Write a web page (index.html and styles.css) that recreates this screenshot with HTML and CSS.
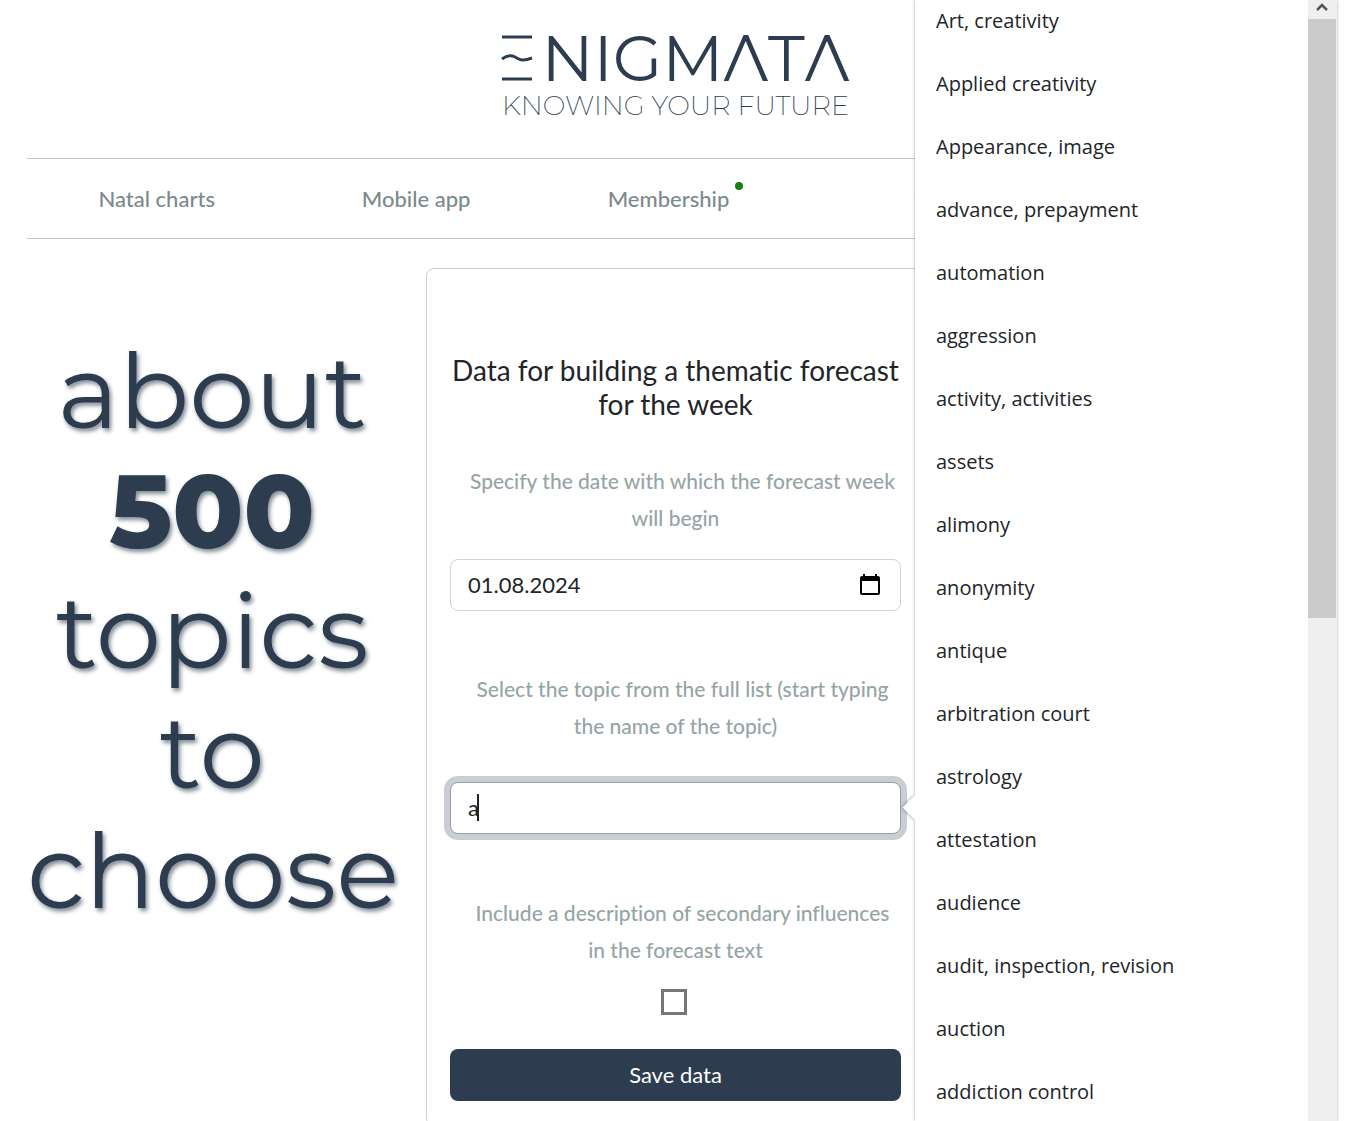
FILE: index.html
```html
<!DOCTYPE html>
<html lang="en">
<head>
  <meta charset="UTF-8" />
  <meta name="viewport" content="width=device-width, initial-scale=1.0"/>
  <title>Enigmata - Thematic forecast</title>
  <link rel="stylesheet" href="styles.css">
</head>
<body>
  <header class="header">
    <a class="logo" href="#">
      <span class="logo-name">
        <svg class="logo-mark" viewBox="0 0 32 46" fill="none" stroke="currentColor" stroke-width="3">
          <path d="M1 2H31M1 44H31" />
          <path d="M1 24C5 21 10 20 14 22S20 27 31 23" />
        </svg>
        <span>NIGMΛTΛ</span>
      </span>
      <span class="logo-tagline">KNOWING YOUR FUTURE</span>
    </a>
  </header>

  <nav class="nav">
    <a href="#">Natal charts</a>
    <a href="#">Mobile app</a>
    <a href="#">Membership<span class="dot"></span></a>
    <a href="#">Blog</a>
  </nav>

  <main class="content">
    <div class="promo">about<br><b>500</b><br>topics<br>to<br>choose</div>

    <form class="card">
      <h1>Data for building a thematic forecast for the week</h1>

      <label for="date">Specify the date with which the forecast week will begin</label>
      <div class="field">
        <input type="text" id="date" value="01.08.2024" />
        <svg class="calendar" viewBox="0 0 20 22">
          <path fill="#000" fill-rule="evenodd" d="M3 0h2v2h10V0h2v2h1a2 2 0 0 1 2 2v15a2 2 0 0 1-2 2H2a2 2 0 0 1-2-2V4a2 2 0 0 1 2-2h1zM2 7v12h16V7z" />
        </svg>
      </div>

      <label class="topic-label" for="topic">Select the topic from the full list (start typing the name of the topic)</label>
      <div class="field topic-field">
        <input type="text" id="topic" class="focused" value="a" autocomplete="off" />
        <span class="caret"></span>
      </div>

      <label class="secondary-label" for="secondary">Include a description of secondary influences<br>in the forecast text</label>
      <input type="checkbox" id="secondary" />

      <button type="button" class="save-btn">Save data</button>
    </form>
  </main>

  <!-- Topic suggestions -->
  <div class="suggestions">
    <ul>
      <li>Art, creativity</li>
      <li>Applied creativity</li>
      <li>Appearance, image</li>
      <li>advance, prepayment</li>
      <li>automation</li>
      <li>aggression</li>
      <li>activity, activities</li>
      <li>assets</li>
      <li>alimony</li>
      <li>anonymity</li>
      <li>antique</li>
      <li>arbitration court</li>
      <li>astrology</li>
      <li>attestation</li>
      <li>audience</li>
      <li>audit, inspection, revision</li>
      <li>auction</li>
      <li>addiction control</li>
    </ul>
    <div class="scrollbar">
      <svg viewBox="0 0 12 8" fill="none" stroke="#555" stroke-width="2.5"><path d="M1 7L6 2L11 7" /></svg>
      <div class="thumb"></div>
    </div>
  </div>
</body>
</html>
```
FILE: styles.css
```css
* {
  box-sizing: border-box;
}

body {
  margin: 0;
  padding: 0 29px 0 27px;
  height: 100vh;
  overflow: hidden;
  font-family: Lato, sans-serif;
  font-size: 22px;
  font-variant-ligatures: no-common-ligatures;
  color: #212529;
  background: #fff;
}

.header {
  display: flex;
  justify-content: center;
  height: 158px;
  padding-top: 28px;
}

.logo {
  display: flex;
  flex-direction: column;
  align-items: center;
  font-family: Montserrat, Inter, sans-serif;
  color: #2d3c4f;
  text-decoration: none;
}

.logo-name {
  display: flex;
  align-items: center;
  gap: 8px;
  font-size: 64px;
  font-weight: 400;
  line-height: 60px;
}

.logo-mark {
  width: 32px;
  height: 46px;
}

.logo-tagline {
  font-size: 27px;
  font-weight: 200;
  line-height: 36px;
}

.nav {
  display: grid;
  grid-template-columns: repeat(5, 1fr);
  border-top: 1px solid #c4c4c4;
  border-bottom: 1px solid #c4c4c4;
  line-height: 79px;
  text-align: center;
}

.nav a {
  font-weight: 500;
  color: #7b8a8b;
  text-decoration: none;
}

.dot {
  display: inline-block;
  width: 8px;
  height: 8px;
  margin-left: 6px;
  border-radius: 50%;
  background: #138016;
  vertical-align: 17px;
}

.content {
  display: grid;
  grid-template-columns: minmax(0, 3fr) minmax(0, 4fr) minmax(0, 3fr);
  gap: 25px;
  margin-top: 29px;
}

.promo {
  padding: 63px 4px 0 0;
  font-family: Montserrat, Inter, sans-serif;
  font-size: 104px;
  line-height: 120px;
  text-align: center;
  color: #2d3c4f;
  text-shadow: 2px 3px 4px rgba(45, 60, 79, 0.6);
}

.promo b {
  font-weight: 800;
}

.card {
  display: flex;
  flex-direction: column;
  padding: 84px 23px 24px;
  border: 1px solid #cfcfcf;
  border-radius: 8px;
  text-align: center;
}

h1 {
  margin: 0 0 41px;
  font-size: 28px;
  font-weight: 400;
  line-height: 34px;
}

label {
  font-size: 21px;
  font-weight: 500;
  line-height: 37px;
  text-indent: 14px;
  color: #95a5a6;
}

.field {
  position: relative;
  margin-top: 23px;
}

.field input {
  display: block;
  width: 100%;
  height: 52px;
  padding: 0 17px 2px;
  border: 1px solid #ced4da;
  border-radius: 8px;
  font-family: inherit;
  font-size: 22px;
  color: #212529;
  background: #fff;
  outline: none;
}

.field .focused {
  border-color: #96a0ab;
  box-shadow: 0 0 0 6px #cacdd3;
}

.calendar {
  position: absolute;
  top: 15px;
  right: 21px;
  width: 20px;
  height: 22px;
}

.topic-label {
  margin-top: 59px;
}

.topic-field {
  margin-top: 38px;
}

.caret {
  position: absolute;
  top: 12px;
  left: 27px;
  width: 2px;
  height: 27px;
  background: #212529;
}

.secondary-label {
  margin-top: 60px;
}

#secondary {
  appearance: none;
  align-self: center;
  width: 26px;
  height: 26px;
  margin: 21px 2px 34px 0;
  border: 3px solid #767676;
}

.save-btn {
  height: 52px;
  padding: 0 0 2px;
  border: none;
  border-radius: 8px;
  font-family: inherit;
  font-size: 22px;
  color: #fff;
  background: #2d3c4f;
  cursor: pointer;
}

/* covers the right part of the page */
.suggestions {
  position: absolute;
  top: 0;
  right: 16px;
  bottom: 0;
  display: flex;
  width: 422px;
  background: #fff;
  box-shadow: 0 0 3px rgba(0, 0, 0, 0.35);
}

.suggestions::before {
  content: "";
  position: absolute;
  top: 799px;
  left: -9px;
  width: 17px;
  height: 17px;
  background: #fff;
  box-shadow: -1px 1px 3px rgba(0, 0, 0, 0.25);
  transform: rotate(45deg);
}

.suggestions ul {
  position: relative;
  flex: 1;
  margin: 0;
  padding: 0;
  list-style: none;
  overflow: hidden;
  background: #fff;
}

.suggestions li {
  padding: 0 21px 21px;
  font-family: "Segoe UI", "Open Sans", sans-serif;
  font-size: 20px;
  line-height: 42px;
  color: #212529;
}

.scrollbar {
  width: 29px;
  padding-right: 1px;
  text-align: center;
  background: #efefef;
}

.scrollbar svg {
  display: block;
  width: 12px;
  height: 8px;
  margin: 3px auto 8px;
}

.thumb {
  height: 599px;
  background: #cbcbcb;
}
```
